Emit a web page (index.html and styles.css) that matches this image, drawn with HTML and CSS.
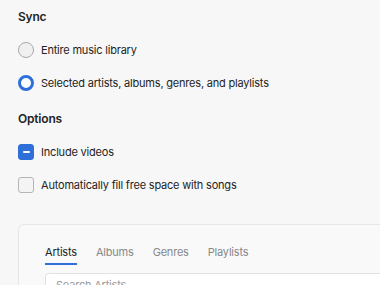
FILE: index.html
```html
<!DOCTYPE html>
<html lang="en">
<head>
    <meta charset="UTF-8">
    <title>Sync settings</title>
    <link rel="stylesheet" href="styles.css">
</head>
<body>
    <div class="settings">
        <h2 class="section-title">Sync</h2>
        <div class="option-list">
            <label class="option">
                <span class="radio"></span>
                <span>Entire music library</span>
            </label>
            <label class="option">
                <span class="radio checked"></span>
                <span>Selected artists, albums, genres, and playlists</span>
            </label>
        </div>

        <h2 class="section-title">Options</h2>
        <div class="option-list">
            <label class="option">
                <span class="checkbox checked"></span>
                <span>Include videos</span>
            </label>
            <label class="option">
                <span class="checkbox"></span>
                <span>Automatically fill free space with songs</span>
            </label>
        </div>

        <div class="card">
            <div class="tabs">
                <span class="tab active">Artists</span>
                <span class="tab">Albums</span>
                <span class="tab">Genres</span>
                <span class="tab">Playlists</span>
            </div>
            <div class="search">Search Artists</div>
        </div>
    </div>
</body>
</html>
```

FILE: styles.css
```css
:root {
    --text-color: #242424;
    --muted-color: #888;
    --background-color: #f7f7f7;
    --accent-color: #2f6fd9;
}

body {
    font-family: Inter, "Liberation Sans", sans-serif;
    font-size: 11px;
    letter-spacing: -0.2px;
    margin: 0;
    background-color: var(--background-color);
    color: var(--text-color);
    overflow: hidden;
}

.settings {
    padding: 9px 0 0 18px;
}

.section-title {
    font-size: 12px;
    font-weight: 600;
    margin: 0 0 18px;
}

.option-list {
    display: flex;
    flex-direction: column;
    gap: 17px;
    margin-bottom: 20px;
}

.option {
    display: flex;
    align-items: center;
    gap: 7px;
    height: 16px;
}

.radio {
    width: 14px;
    height: 14px;
    border: 1px solid #a9a9a9;
    border-radius: 50%;
    background-color: #f0f0f0;
}

.radio.checked {
    width: 10px;
    height: 10px;
    border: 3px solid var(--accent-color);
    background-color: #fff;
}

.checkbox {
    width: 14px;
    height: 14px;
    border: 1px solid #b5b5b5;
    border-radius: 3px;
    background-color: #f4f4f4;
    display: flex;
    align-items: center;
    justify-content: center;
}

.checkbox.checked {
    border-color: var(--accent-color);
    background-color: var(--accent-color);
}

.checkbox.checked::after {
    content: "";
    width: 7px;
    height: 1.5px;
    background-color: #fff;
    border-radius: 1px;
}

.card {
    margin-top: 31px;
    border: 1px solid #e6e6e6;
    border-right: none;
    border-radius: 6px 0 0 6px;
    background-color: #f9f9f9;
    padding: 20px 0 0 26px;
    height: 80px;
}

.tabs {
    display: flex;
    gap: 19px;
    margin-bottom: 8px;
}

.tab {
    color: var(--muted-color);
    padding-bottom: 4px;
    border-bottom: 2px solid transparent;
}

.tab.active {
    color: var(--text-color);
    border-bottom-color: var(--accent-color);
}

.search {
    border: 1px solid #e2e2e2;
    border-right: none;
    border-radius: 4px 0 0 4px;
    background-color: #fff;
    padding: 4px 10px;
    color: #9a9a9a;
}
```
